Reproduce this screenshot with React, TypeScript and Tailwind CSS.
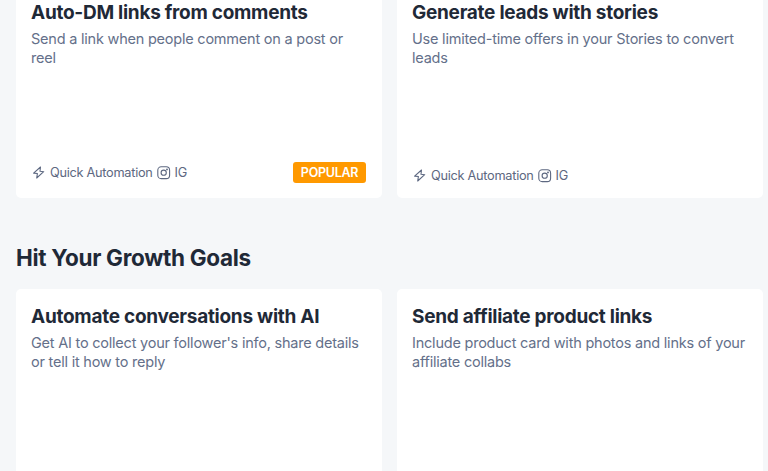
const templates = [
  {
    title: 'Auto-DM links from comments',
    text: 'Send a link when people comment on a post or reel',
    popular: true,
  },
  {
    title: 'Generate leads with stories',
    text: 'Use limited-time offers in your Stories to convert leads',
    popular: false,
  },
];

const goals = [
  {
    title: 'Automate conversations with AI',
    text: "Get AI to collect your follower's info, share details or tell it how to reply",
  },
  {
    title: 'Send affiliate product links',
    text: 'Include product card with photos and links of your affiliate collabs',
  },
];

const BoltIcon = () => (
  <svg width="14" height="14" viewBox="0 0 14 14" fill="none" stroke="currentColor" strokeWidth="1.1" strokeLinejoin="round">
    <path d="M8.5 1 1.6 7.1l3.8.4-.7 4.5 7-6.3-3.7-.5z" />
  </svg>
);

const InstagramIcon = () => (
  <svg width="14" height="14" viewBox="0 0 14 14" fill="none" stroke="currentColor" strokeWidth="1.1">
    <rect x="0.8" y="0.8" width="11.8" height="11.8" rx="3.4" />
    <circle cx="6.7" cy="6.7" r="2.6" />
    <circle cx="10" cy="3.4" r="0.4" />
  </svg>
);

type CardTextProps = { title: string; text: string };

const CardText = ({ title, text }: CardTextProps) => (
  <>
    <h3 className="text-[19px] leading-6 font-bold tracking-[-0.27px] text-[#1f2937] whitespace-nowrap">{title}</h3>
    <p className="mt-1 text-[14.5px] leading-[19px] tracking-[-0.22px] text-[#64708a]">{text}</p>
  </>
);

export default function App() {
  return (
    <div className="h-[471px] w-[768px] overflow-hidden bg-[#f5f7f9] pl-4 font-[Inter,sans-serif]">
      <div className="grid grid-cols-[366px_366px] gap-[15px]">
        {templates.map((item) => (
          <div key={item.title} className="flex h-[198px] flex-col rounded-b-[5px] bg-white px-[15px] pt-px pb-[15px]">
            <CardText title={item.title} text={item.text} />
            <div className="mt-auto flex items-center justify-between text-[12.75px] leading-[14px] tracking-[-0.28px] text-[#5d6881]">
              <div className="flex items-center pl-px">
                <BoltIcon />
                <span className="ml-1">Quick Automation</span>
                <span className="ml-1"><InstagramIcon /></span>
                <span className="ml-1">IG</span>
              </div>
              {item.popular && (
                <span className="mr-px w-[73px] rounded-[3px] bg-[#ff9900] text-center text-[12.5px] leading-[21px] font-semibold text-white">POPULAR</span>
              )}
            </div>
          </div>
        ))}
      </div>

      <h2 className="mt-[46px] text-[22.5px] leading-7 font-bold tracking-[-0.3px] text-[#1f2937]">Hit Your Growth Goals</h2>

      <div className="mt-[17px] grid grid-cols-[366px_366px] gap-[15px]">
        {goals.map((item) => (
          <div key={item.title} className="h-[240px] rounded-[5px] bg-white px-[15px] pt-4">
            <CardText title={item.title} text={item.text} />
          </div>
        ))}
      </div>
    </div>
  );
}
